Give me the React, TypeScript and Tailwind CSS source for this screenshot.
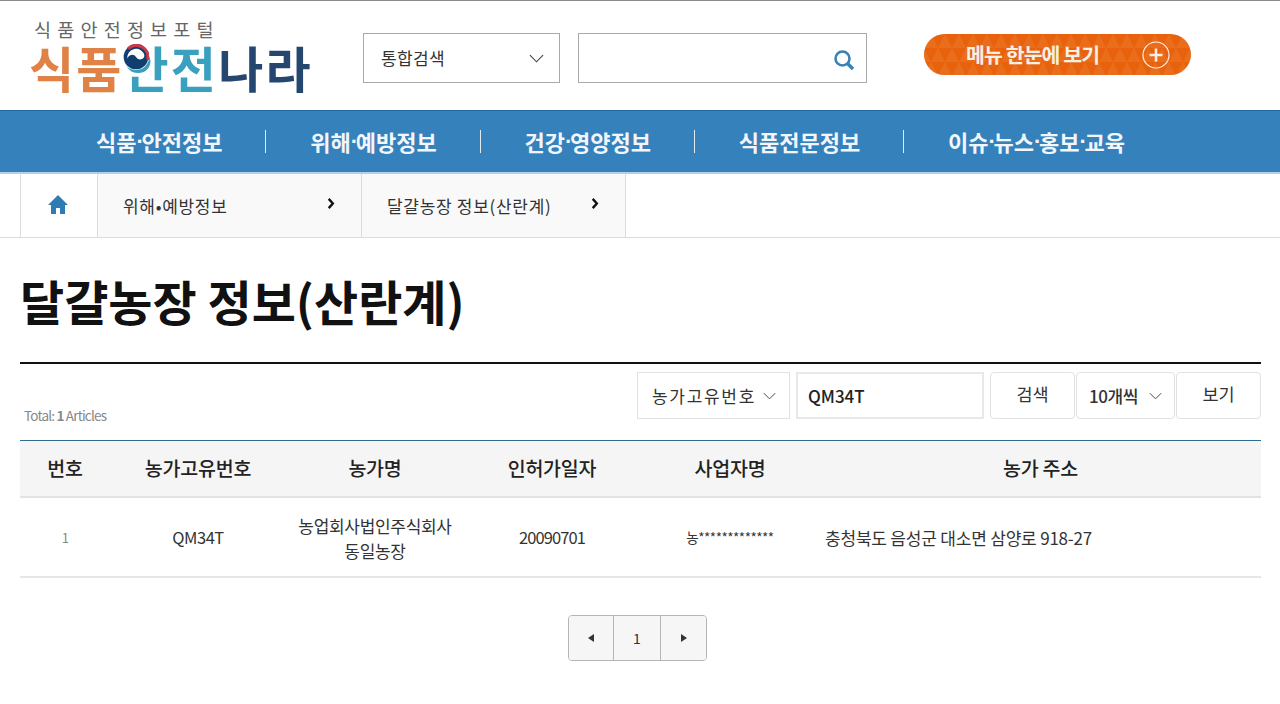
const KR = "font-['Noto_Sans_CJK_KR','Noto_Sans',sans-serif]";

function Chevron({ className }: { className: string }) {
  return (
    <svg viewBox="0 0 16 9" className={className} fill="none" stroke="#444" strokeWidth="1.2">
      <path d="M1 1l7 7 7-7" />
    </svg>
  );
}

function Crumb({ label, width }: { label: string; width: string }) {
  return (
    <div className={`${width} flex h-full items-center justify-between border-r border-[#dcdcdc] bg-[#f9f9f9] pl-[25px] pr-[26px]`}>
      <span className="text-[17px] tracking-[0.7px] text-[#333]">{label}</span>
      <svg viewBox="0 0 8 12" className="mb-[4px] h-[11px] w-[8px]" fill="none" stroke="#111" strokeWidth="2.6">
        <path d="M1.5 1l4.5 5-4.5 5" />
      </svg>
    </div>
  );
}

function Logo() {
  return (
    <div className="w-[363px] pl-[29px]">
      <div className="pl-[5px] text-[18.5px] leading-[24px] tracking-[6.2px] text-[#666]">식품안전정보포털</div>
      <div className="relative mt-[1px] flex text-[49px] font-bold leading-[50px] tracking-[2.2px]">
        <span className="text-[#e08146]">식품</span>
        <span className="text-[#3aa0c0]">안전</span>
        <span className="text-[#24466f]">나라</span>
        <svg viewBox="0 0 40 40" className="absolute left-[94px] top-[2px] h-[26px] w-[26px]">
          <circle cx="20" cy="20" r="20" fill="#fff" />
          <circle cx="20" cy="20" r="19" fill="#0f3f70" />
          <path d="M8 7A18 18 0 0 1 38 24" fill="none" stroke="#c8394b" strokeWidth="5" />
          <path d="M7 23A7 7 0 0 1 20 20A7 7 0 0 0 33 18A13 13 0 0 0 7 23Z" fill="#fff" />
        </svg>
      </div>
    </div>
  );
}

function Header() {
  return (
    <header className="flex h-[110px] items-start border-t border-[#8a8a8a]">
      <div className="pt-[16px]">
        <Logo />
      </div>
      <div className="mt-[32px] flex h-[50px] w-[197px] items-center justify-between border border-[#aaa] pl-[17px] pr-[15px]">
        <span className="text-[17px] tracking-[0.4px] text-[#333]">통합검색</span>
        <Chevron className="h-[9px] w-[15px]" />
      </div>
      <div className="ml-[18px] mt-[32px] flex h-[50px] w-[289px] items-center justify-end border border-[#aaa] pr-[11px]">
        <svg viewBox="0 0 22 22" className="mt-[3px] h-[22px] w-[22px]" fill="none" stroke="#3a82b4">
          <circle cx="9.5" cy="9.5" r="7" strokeWidth="2.6" />
          <path d="M14.5 14.5l5.5 5.5" strokeWidth="3.4" />
        </svg>
      </div>
      <div className="relative ml-[57px] mt-[33px] flex h-[41px] w-[267px] items-center overflow-hidden rounded-full bg-[#e8620e] pl-[42px]">
        <svg className="absolute inset-0 h-full w-full" aria-hidden="true">
          <defs>
            <pattern id="tri" width="14" height="28" patternUnits="userSpaceOnUse">
              <path d="M0 14L7 0l7 14z" fill="#f08a3a" opacity="0.3" />
              <path d="M-7 28L0 14l7 14zM7 28l7-14 7 14z" fill="#f08a3a" opacity="0.3" />
            </pattern>
          </defs>
          <rect width="267" height="41" fill="url(#tri)" />
        </svg>
        <span className="relative text-[20.5px] font-bold tracking-[-0.9px] text-[#f6efe4]">메뉴 한눈에 보기</span>
        <svg viewBox="0 0 28 28" className="absolute left-[218px] top-[7px] h-[28px] w-[28px]" fill="none" stroke="#fbeee2">
          <circle cx="14" cy="14" r="13" strokeWidth="1.2" />
          <path d="M14 7.5v13M7.5 14h13" strokeWidth="2.6" />
        </svg>
      </div>
    </header>
  );
}

function NavLabel({ text }: { text: string }) {
  const parts = text.split("·");
  return (
    <span className="flex text-[22px] font-bold text-[#f2f6fa]">
      {parts.map((p, i) => (
        <span key={p} className="flex">
          {i > 0 && <span className="w-[5px] text-center font-['Liberation_Sans',sans-serif] font-bold">·</span>}
          {p}
        </span>
      ))}
    </span>
  );
}

function Nav() {
  const items = ["식품·안전정보", "위해·예방정보", "건강·영양정보", "식품전문정보", "이슈·뉴스·홍보·교육"];
  return (
    <nav className="flex h-[64px] items-center border-t border-b-[2px] border-t-[#1f6c9f] border-b-[#b4d0e6] bg-[#3581bb] pl-[96px]">
      {items.map((t, i) => (
        <div key={t} className="flex items-center">
          {i > 0 && <span className="ml-[43px] mr-[43.8px] h-[23px] w-px bg-[#dcebf5]" />}
          <NavLabel text={t} />
        </div>
      ))}
    </nav>
  );
}

function Breadcrumb() {
  return (
    <div className="flex h-[64px] border-b border-[#dcdcdc] pl-[20px]">
      <div className="flex w-[78px] items-center justify-center border-x border-[#dcdcdc]">
        <svg viewBox="0 0 20 19" className="mb-[3px] mr-[2px] h-[19px] w-[20px]" fill="#2f7cb5">
          <path d="M10 0L20 10H17V19H12V13H8V19H3V10H0Z" />
        </svg>
      </div>
      <Crumb label="위해•예방정보" width="w-[264px]" />
      <Crumb label="달걀농장 정보(산란계)" width="w-[264px]" />
    </div>
  );
}

function Toolbar() {
  const box = "flex h-[47px] items-center border border-[#e2e2e2]";
  return (
    <div className="flex h-[76px] items-start justify-between pt-[8px]">
      <span className="ml-[4px] mt-[33px] text-[13.5px] tracking-[-0.8px] text-[#888]">
        Total: <b className="font-bold">1</b> Articles
      </span>
      <div className="flex">
        <div className={`${box} w-[153px] justify-between pl-[14px] pr-[13px]`}>
          <span className="text-[17px] tracking-[1.7px] text-[#333]">농가고유번호</span>
          <Chevron className="h-[8px] w-[13px]" />
        </div>
        <div className="ml-[6px] flex h-[47px] w-[188px] items-center border-2 border-[#e8e8e8] pl-[10px]">
          <span className="text-[17px] font-medium text-[#222]">QM34T</span>
        </div>
        <div className={`${box} ml-[6px] w-[85px] justify-center rounded-[4px] pb-[2px]`}>
          <span className="text-[17.5px] text-[#333]">검색</span>
        </div>
        <div className={`${box} ml-[1px] w-[99px] justify-between rounded-[4px] pl-[12px] pr-[12px]`}>
          <span className="text-[17px] font-medium tracking-[-0.4px] text-[#333]">10개씩</span>
          <Chevron className="h-[8px] w-[13px]" />
        </div>
        <div className={`${box} ml-[1px] w-[85px] justify-center rounded-[4px] pb-[2px]`}>
          <span className="text-[17.5px] text-[#333]">보기</span>
        </div>
      </div>
    </div>
  );
}

function FarmTable() {
  const cols = "grid grid-cols-[90px_176px_178px_176px_180px_1fr] items-center text-center";
  const heads = ["번호", "농가고유번호", "농가명", "인허가일자", "사업자명", "농가 주소"];
  return (
    <div className="border-t border-[#2f6d8f]">
      <div className={`${cols} h-[57px] border-b-[2px] border-[#e2e2e2] bg-[#f5f5f5] pb-[1px] text-[19.5px] font-medium tracking-[-0.2px] text-[#222]`}>
        {heads.map((h) => (
          <span key={h}>{h}</span>
        ))}
      </div>
      <div className={`${cols} h-[80px] border-b-[2px] border-[#e6e6e6] pt-[1px] text-[16.5px] tracking-[-0.9px] text-[#333]`}>
        <span className="text-[13px] tracking-[-0.5px] text-[#888]">1</span>
        <span className="tracking-[-0.5px]">QM34T</span>
        <span className="text-[17px] leading-[25px] tracking-[-0.3px]">
          농업회사법인주식회사
          <br />
          동일농장
        </span>
        <span>20090701</span>
        <span className="text-[13.5px] tracking-[-0.5px]">농*************</span>
        <span className="pl-[5px] text-left text-[17px] tracking-[-0.2px]">충청북도 음성군 대소면 삼양로 918-27</span>
      </div>
    </div>
  );
}

function Pager() {
  const cell = "flex h-full items-center justify-center bg-[#f6f6f6]";
  return (
    <div className="mt-[37px] flex justify-center pr-[6px]">
      <div className="flex h-[46px] w-[139px] overflow-hidden rounded-[4px] border border-[#b5b5b5]">
        <div className={`${cell} w-[45px] border-r border-[#b5b5b5]`}>
          <span className="h-0 w-0 border-y-[4px] border-r-[6px] border-y-transparent border-r-[#333]" />
        </div>
        <div className={`${cell} w-[47px] border-r border-[#b5b5b5] text-[14px] text-[#333]`}>1</div>
        <div className={`${cell} flex-1`}>
          <span className="h-0 w-0 border-y-[4px] border-l-[6px] border-y-transparent border-l-[#333]" />
        </div>
      </div>
    </div>
  );
}

export default function App() {
  return (
    <div className={`${KR} h-[704px] w-[1280px] overflow-hidden bg-white`}>
      <Header />
      <Nav />
      <Breadcrumb />
      <main className="pl-[20px] pr-[19px]">
        <h1 className="h-[126px] border-b-[2px] border-[#111] pt-[27px] text-[48px] font-bold leading-[70px] text-[#111]">
          달걀농장 정보(산란계)
        </h1>
        <Toolbar />
        <FarmTable />
        <Pager />
      </main>
    </div>
  );
}
